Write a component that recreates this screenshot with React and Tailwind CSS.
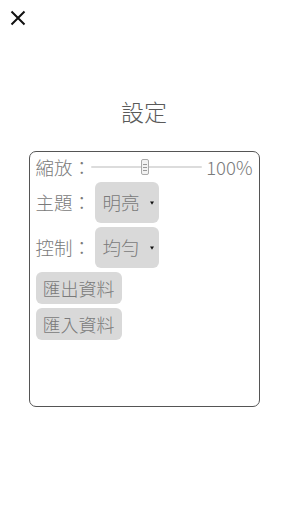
export default function App() {
  const font = { fontFamily: '"Noto Sans CJK TC", "Noto Sans", sans-serif' };
  const Select = ({ value }) => (
    <div className="flex items-center h-[41px] w-[64px] rounded-[6px] bg-[#d9d9d9] pl-[8px] pr-[5px]">
      <span className="text-[18.5px] leading-none text-[#7a7a7a] font-extralight">{value}</span>
      <svg className="ml-auto" width="4" height="4" viewBox="0 0 4 4">
        <path d="M0 0.5 H4 L2 3.8 Z" fill="#111" />
      </svg>
    </div>
  );
  return (
    <div className="w-[288px] h-[512px] bg-white relative" style={font}>
      <div className="h-[36px] flex items-start pl-[10px] pt-[10px]">
        <svg width="16" height="16" viewBox="0 0 16 16">
          <path d="M1.5 1.5 L14.5 14.5 M14.5 1.5 L1.5 14.5" stroke="#111" strokeWidth="2" fill="none" />
        </svg>
      </div>
      <div className="mt-[60px] text-center text-[23px] leading-[30px] text-[#5a5a5a] font-extralight">設定</div>
      <div className="mx-auto mt-[25px] w-[231px] h-[256px] border border-[#555] rounded-[7px] px-[6px] flex flex-col gap-[4px] text-[#7a7a7a] font-extralight">
        <div className="flex items-center h-[26px] pt-[4px]">
          <span className="text-[18.5px] leading-none">縮放：</span>
          <div className="relative flex-1 h-[20px] flex items-center mr-[4px]">
            <div className="w-full h-[2px] bg-[#dcdcdc] rounded"></div>
            <div className="absolute left-[50px] top-[2px] w-[8px] h-[16px] bg-[#f2f2f2] border border-[#aaa] rounded-[2px] flex flex-col items-center justify-center gap-[2px]">
              <div className="w-[4px] h-px bg-[#999]"></div>
              <div className="w-[4px] h-px bg-[#999]"></div>
              <div className="w-[4px] h-px bg-[#999]"></div>
            </div>
          </div>
          <span className="text-[18.5px] leading-none">100%</span>
        </div>
        <div className="flex items-center">
          <span className="text-[18.5px] leading-none w-[59px]">主題：</span>
          <Select value="明亮" />
        </div>
        <div className="flex items-center">
          <span className="text-[18.5px] leading-none w-[59px]">控制：</span>
          <Select value="均勻" />
        </div>
        <div className="flex">
          <div className="h-[32px] px-[7px] rounded-[6px] bg-[#d9d9d9] flex items-center text-[18px] leading-none">匯出資料</div>
        </div>
        <div className="flex">
          <div className="h-[32px] px-[7px] rounded-[6px] bg-[#d9d9d9] flex items-center text-[18px] leading-none">匯入資料</div>
        </div>
      </div>
    </div>
  );
}
